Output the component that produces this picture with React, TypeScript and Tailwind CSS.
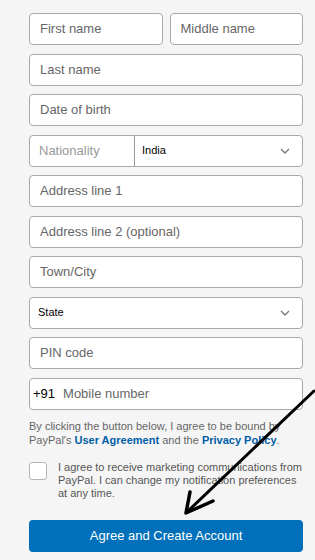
import React from "react";

const font = { fontFamily: '"Liberation Sans", Arial, sans-serif' };

const Field = ({ label, className = "" }: { label: string; className?: string }) => (
  <div
    className={`h-8 flex items-center px-[10px] bg-white border border-[#a9a9a9] rounded-[4px] text-[13px] text-[#666] ${className}`}
  >
    {label}
  </div>
);

const Chevron = () => (
  <svg width="10" height="6" viewBox="0 0 10 6" fill="none">
    <path d="M1 1L5 5L9 1" stroke="#777" strokeWidth="1.3" />
  </svg>
);

const Select = ({ value }: { value: string }) => (
  <div className="h-8 flex items-center justify-between pl-[8px] pr-[12px] bg-white border border-[#a9a9a9] rounded-[4px] text-[11px] text-black">
    <span>{value}</span>
    <Chevron />
  </div>
);

export default function App() {
  return (
    <div className="relative w-[315px] h-[560px] bg-[#f5f5f5] overflow-hidden" style={font}>
      <div className="w-[274px] ml-[29px] pt-[13px] flex flex-col gap-[8.5px]">
        <div className="grid grid-cols-2 gap-[7px]">
          <Field label="First name" />
          <Field label="Middle name" />
        </div>
        <Field label="Last name" />
        <Field label="Date of birth" />
        <div className="h-8 flex bg-white border border-[#a9a9a9] rounded-[4px]">
          <div className="w-[105px] flex items-center pl-[9px] text-[13px] text-[#999] border-r border-[#999]">
            Nationality
          </div>
          <div className="flex-1 flex items-center justify-between pl-[7px] pr-[12px] text-[11px] text-black">
            <span>India</span>
            <Chevron />
          </div>
        </div>
        <Field label="Address line 1" />
        <Field label="Address line 2 (optional)" />
        <Field label="Town/City" />
        <Select value="State" />
        <Field label="PIN code" />
        <div className="h-8 flex items-center pl-[3px] bg-white border border-[#a9a9a9] rounded-[4px] text-[13px]">
          <span className="text-black">+91</span>
          <span className="ml-[8px] text-[#666]">Mobile number</span>
        </div>
      </div>

      <p className="w-[274px] ml-[29px] mt-[9px] text-[11px] leading-[14px] text-[#666]">
        By clicking the button below, I agree to be bound by PayPal's{" "}
        <span className="font-bold text-[#005ea6]">User Agreement</span> and the{" "}
        <span className="font-bold text-[#005ea6]">Privacy Policy</span>.
      </p>

      <div className="w-[274px] ml-[29px] mt-[14px] flex gap-[11px]">
        <div className="w-[18px] h-[18px] shrink-0 mt-[1px] bg-white border border-[#b5b5b5] rounded-[3px]" />
        <p className="text-[11px] leading-[13px] text-[#555]">
          I agree to receive marketing communications from PayPal. I can change my notification preferences at any time.
        </p>
      </div>

      <div className="w-[274px] ml-[29px] mt-[20px]">
        <button className="w-full h-8 rounded-[4px] bg-[#0070ba] text-white text-[13px]">
          Agree and Create Account
        </button>
      </div>

      <svg className="absolute left-0 top-0 pointer-events-none" width="315" height="560" viewBox="0 0 315 560" fill="none">
        <path d="M314 391 L187 512" stroke="black" strokeWidth="3" strokeLinecap="round" />
        <path d="M190 492 L186 513 L213 501" stroke="black" strokeWidth="3.5" strokeLinecap="round" strokeLinejoin="round" />
      </svg>
    </div>
  );
}
